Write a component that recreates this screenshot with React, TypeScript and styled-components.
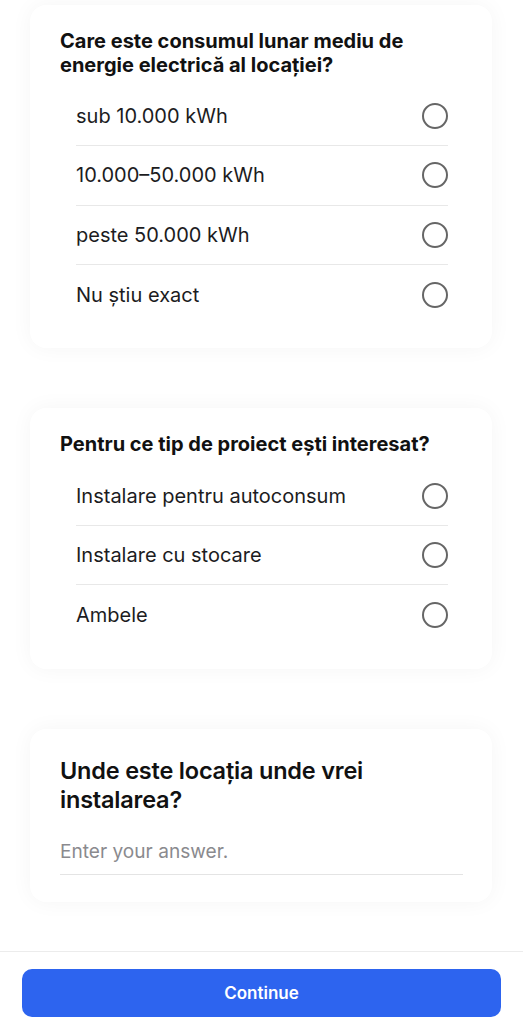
import React from 'react'
import styled, { createGlobalStyle } from 'styled-components'

const GlobalStyle = createGlobalStyle`
  * { box-sizing: border-box; }
  html, body {
    margin: 0;
    padding: 0;
    background: #ffffff;
    font-family: Inter, "Noto Sans", "Liberation Sans", sans-serif;
    color: #111;
  }
`

interface Question {
  title: string
  options: string[]
}

const questions: Question[] = [
  {
    title: 'Care este consumul lunar mediu de energie electrică al locației?',
    options: ['sub 10.000 kWh', '10.000–50.000 kWh', 'peste 50.000 kWh', 'Nu știu exact'],
  },
  {
    title: 'Pentru ce tip de proiect ești interesat?',
    options: ['Instalare pentru autoconsum', 'Instalare cu stocare', 'Ambele'],
  },
]

const App = () => {
  return (
    <Page>
      <GlobalStyle />
      <Scroll>
        {questions.map((q) => (
          <Card key={q.title}>
            <Title>{q.title}</Title>
            <Options>
              {q.options.map((o) => (
                <Option key={o}>
                  <span>{o}</span>
                  <Radio />
                </Option>
              ))}
            </Options>
          </Card>
        ))}
        <Card $text>
          <BigTitle>Unde este locația unde vrei instalarea?</BigTitle>
          <Answer placeholder="Enter your answer." />
        </Card>
      </Scroll>
      <Footer>
        <ContinueButton>Continue</ContinueButton>
      </Footer>
    </Page>
  )
}

const Page = styled.div`
  height: 1024px;
  display: flex;
  flex-direction: column;
  overflow: hidden;
`
const Scroll = styled.div`
  flex: 1;
  display: flex;
  flex-direction: column;
  gap: 60px;
  padding: 5px 31px 0 30px;
`
const Card = styled.div<{ $text?: boolean }>`
  background: #fff;
  border-radius: 16px;
  box-shadow: 0 0 22px rgba(0, 0, 0, 0.045);
  padding: ${(p) => (p.$text ? '27px 29px 27px 30px' : '25px 29px 24px 30px')};
`
const Title = styled.h2`
  margin: 0 0 10px;
  font-size: 20px;
  line-height: 23.5px;
  font-weight: 700;
  color: #111;
`
const BigTitle = styled.h2`
  margin: 0 0 25px;
  font-size: 23.5px;
  line-height: 29px;
  font-weight: 600;
  letter-spacing: -0.2px;
  color: #111;
  padding-right: 80px;
`
const Options = styled.div`
  display: flex;
  flex-direction: column;
  padding: 0 15px 0 16px;
`
const Option = styled.div`
  display: flex;
  align-items: center;
  justify-content: space-between;
  height: 59.3px;
  font-size: 20px;
  color: #1c1c1e;
  border-bottom: 1px solid #e8e8e8;
  &:last-child {
    border-bottom: none;
  }
`
const Radio = styled.span`
  width: 26px;
  height: 26px;
  border-radius: 50%;
  border: 2.5px solid #666;
`
const Answer = styled.input`
  display: block;
  width: 100%;
  border: none;
  border-bottom: 1px solid #e4e4e4;
  outline: none;
  padding: 0 0 11px;
  font-family: inherit;
  font-size: 19.1px;
  line-height: 24px;
  height: 36px;
  color: #111;
  background: transparent;
  &::placeholder {
    color: #8a8a8e;
  }
`
const Footer = styled.div`
  border-top: 1px solid #ececec;
  padding: 17px 22px 7px;
  background: #fff;
`
const ContinueButton = styled.button`
  width: 100%;
  height: 48px;
  border: none;
  border-radius: 10px;
  background: #2d64ef;
  color: #fff;
  font-family: inherit;
  font-size: 17px;
  font-weight: 600;
`

export default App
